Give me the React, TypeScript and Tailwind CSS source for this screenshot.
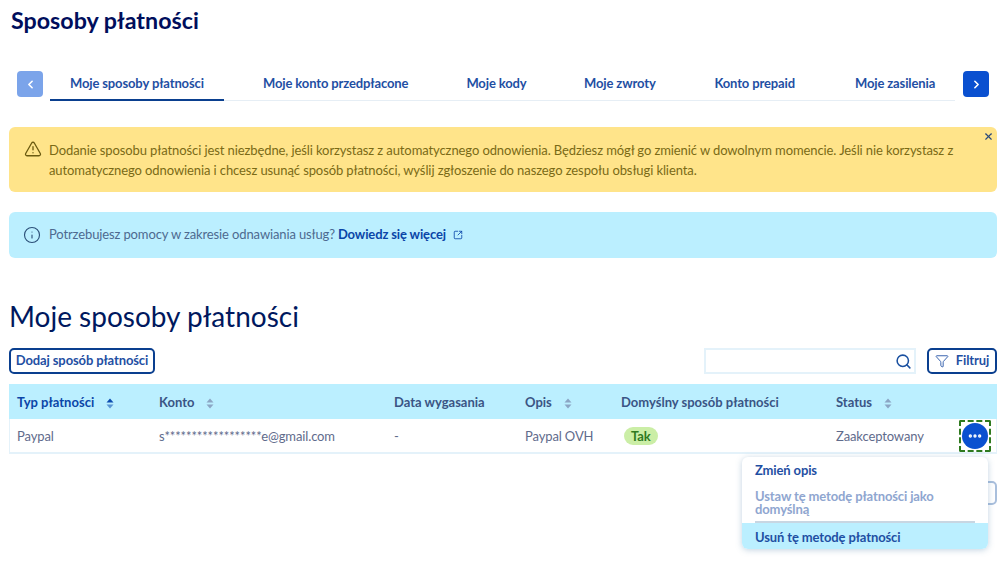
import { ChevronLeft, ChevronRight, Info, Search, SquareArrowOutUpRight, TriangleAlert, X, Ellipsis, Funnel } from "lucide-react";

const tabs = ["Moje konto przedpłacone", "Moje kody", "Moje zwroty", "Konto prepaid", "Moje zasilenia"];

function SortIcon({ active }: { active?: boolean }) {
  return (
    <svg width="8" height="11" viewBox="0 0 8 11" className={active ? "text-[#0a4bb0]" : "text-[#8ba6c4]"}>
      <path d="M4 0.5 L7.5 4.5 H0.5 Z" fill="currentColor" />
      <path d="M4 10.5 L7.5 6.5 H0.5 Z" fill="currentColor" opacity={active ? 0.55 : 1} />
    </svg>
  );
}

export default function App() {
  return (
    <div className="relative h-[562px] w-[1000px] overflow-hidden bg-white font-['Lato',sans-serif] text-[13px] tracking-[-0.125px] text-[#4d5693]">
      <h1 className="pl-[11px] pt-[5px] text-[23.25px] font-bold leading-[30px] tracking-normal text-[#000e5c]">Sposoby płatności</h1>

      <div className="mt-[36px] flex items-start pl-[17px]">
        <button className="flex h-[26px] w-[26px] items-center justify-center rounded-[4px] bg-[#7ba4ea] text-white">
          <ChevronLeft size={13} strokeWidth={3} />
        </button>
        <div className="ml-[7px] flex h-[30px] w-[905px] gap-5 border-b border-[#e6eef5] font-bold text-[#1f4fa3]">
          <div className="-mb-px w-[174px] whitespace-nowrap border-b-2 border-[#0a3f8f] text-center leading-[25px]">Moje sposoby płatności</div>
          {tabs.map((t, i) => (
            <div key={t} className={["w-[184px]", "w-[98px]", "w-[109px]", "w-[121px]", "w-[120px]"][i] + " whitespace-nowrap text-center leading-[25px]"}>
              {t}
            </div>
          ))}
        </div>
        <button className="ml-[8px] flex h-[26px] w-[26px] items-center justify-center rounded-[4px] bg-[#0a50d0] text-white">
          <ChevronRight size={13} strokeWidth={3} />
        </button>
      </div>

      <div className="relative ml-[9px] mt-[26px] flex h-[65px] w-[988px] rounded-[6px] bg-[#ffe48a] pl-[15px] pt-[13px] text-[#7a6a16]">
        <TriangleAlert size={18} strokeWidth={1.75} className="shrink-0 text-[#6b5a10]" />
        <p className="ml-[7px] w-[935px] leading-[20px] tracking-[-0.095px]">
          Dodanie sposobu płatności jest niezbędne, jeśli korzystasz z automatycznego odnowienia. Będziesz mógł go zmienić w dowolnym momencie. Jeśli nie korzystasz z automatycznego odnowienia i chcesz usunąć sposób płatności, wyślij zgłoszenie do naszego zespołu obsługi klienta.
        </p>
        <X size={11} strokeWidth={2.5} className="absolute right-[3px] top-[4px] text-[#2b4a7a]" />
      </div>

      <div className="ml-[9px] mt-[20px] flex h-[46px] w-[988px] items-center rounded-[6px] bg-[#bbefff] pl-[14px] text-[#4d6a90]">
        <Info size={18} strokeWidth={1.5} className="shrink-0 text-[#2b4f78]" />
        <span className="ml-[8px]">Potrzebujesz pomocy w zakresie odnawiania usług?</span>
        <span className="ml-[3px] font-bold text-[#0a46a8]">Dowiedz się więcej</span>
        <SquareArrowOutUpRight size={10} strokeWidth={2} className="ml-[7px] text-[#0a46a8]" />
      </div>

      <h2 className="ml-[9px] mt-[38px] text-[28px] leading-[40px] tracking-normal text-[#00185e]">Moje sposoby płatności</h2>

      <div className="ml-[9px] mt-[12px] flex w-[988px] items-center">
        <button className="flex h-[26px] w-[146px] items-center justify-center rounded-[5px] border-2 border-[#0a3f8f] font-bold text-[#1f4fa3]">
          Dodaj sposób płatności
        </button>
        <div className="ml-auto flex h-[26px] w-[212px] items-center justify-end border-2 border-[#e4f2fa] pr-[2px] text-[#1a50a0]">
          <Search size={17} strokeWidth={2.2} />
        </div>
        <button className="ml-[11px] flex h-[26px] w-[70px] items-center justify-center gap-[7px] rounded-[5px] border-2 border-[#0a3f8f] font-bold text-[#1f4fa3]">
          <Funnel size={14} strokeWidth={1.5} />
          Filtruj
        </button>
      </div>

      <div className="ml-[9px] mt-[10px] w-[988px]">
        <div className="grid h-[35px] grid-cols-[142px_235px_131px_96px_215px_169px] items-center bg-[#bbefff] pt-[3px] font-bold tracking-normal text-[#3a5585]">
          <div className="flex items-center gap-[12px] pl-[8px] text-[#0a46a8]">Typ płatności <SortIcon active /></div>
          <div className="flex items-center gap-[12px] pl-[8px]">Konto <SortIcon /></div>
          <div className="pl-[8px]">Data wygasania</div>
          <div className="flex items-center gap-[12px] pl-[8px]">Opis <SortIcon /></div>
          <div className="pl-[8px]">Domyślny sposób płatności</div>
          <div className="flex items-center gap-[12px] pl-[8px]">Status <SortIcon /></div>
        </div>
        <div className="grid h-[35px] grid-cols-[142px_235px_131px_96px_215px_169px] items-center border-x border-b-2 border-[#e4f2fa] text-[#5f6b8c]">
          <div className="pl-[7px] pt-[3px]">Paypal</div>
          <div className="pl-[7px] pt-[3px]">s******************e@gmail.com</div>
          <div className="pl-[7px] pt-[3px]">-</div>
          <div className="pl-[7px] pt-[3px]">Paypal OVH</div>
          <div className="pl-[10px] pt-[3px]">
            <span className="rounded-full bg-[#cbeea6] px-[7px] py-[1px] font-bold text-[#2f7a1f]">Tak</span>
          </div>
          <div className="flex items-center justify-between pl-[7px] pr-[7px]">
            <span className="pt-[3px]">Zaakceptowany</span>
            <span className="rounded-[2px] border-2 border-dashed border-[#2f7a1f] p-[1px]">
              <span className="flex h-[26px] w-[26px] items-center justify-center rounded-full bg-[#0a50d0] text-white">
                <Ellipsis size={16} strokeWidth={3} />
              </span>
            </span>
          </div>
        </div>
      </div>

      <div className="mr-[3px] mt-[27px] ml-auto h-[24px] w-[30px] rounded-[5px] border-2 border-[#a9bfdc]" />

      <div className="absolute left-[742px] top-[457px] w-[246px] overflow-hidden rounded-[6px] bg-white font-bold shadow-[0_1px_6px_rgba(80,130,170,0.35)]">
        <div className="px-[13px] pb-[12px] pt-[5px] leading-[16px] text-[#1f4fa3]">Zmień opis</div>
        <div className="mx-[13px] border-b-2 border-[#c8d6e2] pb-[5px] leading-[13px] text-[#8fa6d0]">Ustaw tę metodę płatności jako domyślną</div>
        <div className="bg-[#bbefff] px-[13px] pb-[4px] pt-[6px] leading-[16px] text-[#1f4fa3]">Usuń tę metodę płatności</div>
      </div>
    </div>
  );
}
